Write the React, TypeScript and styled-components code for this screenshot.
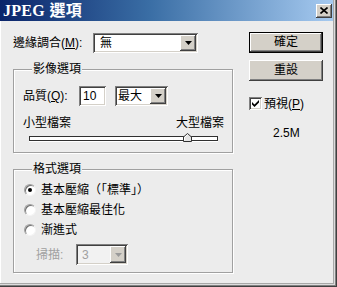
import React from "react";
import styled, { createGlobalStyle, css } from "styled-components";

const FACE = "#d4d0c8";
const BG = "#ececec";

const Global = createGlobalStyle`
  html, body { margin: 0; padding: 0; background: ${BG}; }
  body {
    font-family: "Liberation Sans", "Noto Sans CJK TC", sans-serif;
    font-size: 12px;
    color: #000;
  }
`;

const raised = css`
  background: ${FACE};
  box-shadow: inset -1px -1px #404040, inset 1px 1px #ffffff,
    inset -2px -2px #808080, inset 2px 2px ${FACE};
`;

const sunken = css`
  box-shadow: inset 1px 1px #808080, inset -1px -1px #ffffff,
    inset 2px 2px #404040, inset -2px -2px ${FACE};
`;

const Window = styled.div`
  width: 337px;
  height: 287px;
  box-sizing: border-box;
  background: ${BG};
  padding: 0 4px 4px 0;
  display: flex;
  flex-direction: column;
  box-shadow: inset -1px -1px #404040, inset -2px -2px #808080,
    inset -3px -3px #dcdcdc, inset -4px -4px #a8a8a8, inset 1px 0 #ffffff;
`;

const TitleBar = styled.div`
  height: 21px;
  flex: none;
  display: flex;
  align-items: center;
  justify-content: space-between;
  padding-left: 3px;
  background: linear-gradient(to right, #0a246a 0%, #3a6ea5 45%, #a6caf0 100%);
`;

const Title = styled.span`
  font-family: "Liberation Serif", "Noto Sans CJK TC", serif;
  font-weight: bold;
  font-size: 16px;
  line-height: 21px;
  color: #ffffff;
  letter-spacing: 0.3px;
`;

const CloseButton = styled.div`
  ${raised};
  width: 16px;
  height: 14px;
  margin-right: 1px;
  display: flex;
  align-items: center;
  justify-content: center;
`;

const Body = styled.div`
  display: flex;
  gap: 16px;
  padding: 11px 0 0 13px;
`;

const LeftColumn = styled.div`
  width: 220px;
  padding-top: 1px;
  display: flex;
  flex-direction: column;
`;

const RightColumn = styled.div`
  width: 74px;
  display: flex;
  flex-direction: column;
`;

const Row = styled.div<{ $h?: number; $mt?: number; $pl?: number }>`
  display: flex;
  align-items: center;
  height: ${(p) => p.$h ?? 20}px;
  margin-top: ${(p) => p.$mt ?? 0}px;
  padding-left: ${(p) => p.$pl ?? 0}px;
`;

const FieldLabel = styled.span<{ $w: number; $disabled?: boolean }>`
  width: ${(p) => p.$w}px;
  flex: none;
  line-height: 12px;
  white-space: nowrap;
  color: ${(p) => (p.$disabled ? "#a0a0a0" : "#000")};
`;

const Combo = styled.div<{ $w: number; $h?: number; $disabled?: boolean }>`
  ${sunken};
  width: ${(p) => p.$w}px;
  height: ${(p) => p.$h ?? 20}px;
  flex: none;
  box-sizing: border-box;
  padding: 2px;
  display: flex;
  background: ${(p) => (p.$disabled ? "#f2f2f2" : "#ffffff")};
`;

const ComboText = styled.span<{ $pl: number; $disabled?: boolean }>`
  flex: 1;
  display: flex;
  align-items: center;
  padding-left: ${(p) => p.$pl}px;
  line-height: 12px;
  color: ${(p) => (p.$disabled ? "#a0a0a0" : "#000")};
`;

const DropButton = styled.span`
  ${raised};
  width: 16px;
  flex: none;
  display: flex;
  align-items: center;
  justify-content: center;
`;

const TextBox = styled.div<{ $w: number }>`
  ${sunken};
  width: ${(p) => p.$w}px;
  height: 20px;
  flex: none;
  box-sizing: border-box;
  background: #ffffff;
  padding-left: 4px;
  display: flex;
  align-items: center;
  line-height: 12px;
`;

const Group = styled.div<{ $h: number; $mt: number }>`
  position: relative;
  height: ${(p) => p.$h}px;
  margin-top: ${(p) => p.$mt}px;
  box-sizing: border-box;
  border: 1px solid #a0a0a0;
  box-shadow: 1px 1px 0 #ffffff, inset 1px 1px 0 #ffffff;
`;

const Legend = styled.span`
  position: absolute;
  top: -7px;
  left: 18px;
  padding: 0 1px;
  background: ${BG};
  line-height: 12px;
`;

const QualityGroupBody = styled.div`
  padding: 16px 8px 0 9px;
  display: flex;
  flex-direction: column;
`;

const FormatGroupBody = styled.div`
  padding: 10px 8px 0 10px;
  display: flex;
  flex-direction: column;
`;

const SizeLabels = styled.div`
  margin-top: 11px;
  display: flex;
  justify-content: space-between;
  line-height: 12px;
`;

const Slider = styled.div`
  position: relative;
  height: 9px;
  margin: 4px 6px 0;
`;

const Track = styled.div`
  margin-top: 3px;
  height: 5px;
  box-sizing: border-box;
  background: #ffffff;
  border: 1px solid #303030;
  box-shadow: 0 1px 0 #ffffff;
`;

const Thumb = styled.svg`
  position: absolute;
  top: 0;
  display: block;
`;

const RadioRow = styled.div`
  height: 20px;
  display: flex;
  align-items: center;
  gap: 5px;
  line-height: 12px;
`;

const Radio = styled.span<{ $checked?: boolean }>`
  position: relative;
  width: 12px;
  height: 12px;
  flex: none;
  box-sizing: border-box;
  border-radius: 50%;
  background: #ffffff;
  border: 1px solid;
  border-color: #a0a0a0 #f4f4f4 #f4f4f4 #a0a0a0;
  box-shadow: inset 1px 1px #707070;
  &::after {
    content: "";
    display: ${(p) => (p.$checked ? "block" : "none")};
    position: absolute;
    left: 3px;
    top: 3px;
    width: 4px;
    height: 4px;
    border-radius: 50%;
    background: #000;
  }
`;

const DialogButton = styled.button<{ $default?: boolean }>`
  width: 74px;
  height: 21px;
  padding: 0;
  margin: 0;
  border: none;
  font: inherit;
  line-height: 21px;
  color: #000;
  background: ${FACE};
  box-shadow: ${(p) =>
    p.$default
      ? "inset 0 0 0 1px #000, inset -2px -2px #404040, inset 2px 2px #ffffff, inset -3px -3px #808080"
      : "inset -1px -1px #404040, inset 1px 1px #ffffff, inset -2px -2px #808080"};
`;

const ButtonStack = styled.div`
  display: flex;
  flex-direction: column;
  gap: 7px;
`;

const CheckRow = styled.div`
  margin-top: 16px;
  height: 13px;
  display: flex;
  align-items: center;
  gap: 2px;
  line-height: 12px;
`;

const CheckBox = styled.span`
  ${sunken};
  width: 13px;
  height: 13px;
  flex: none;
  box-sizing: border-box;
  background: #ffffff;
  display: flex;
  align-items: center;
  justify-content: center;
`;

const SizeReadout = styled.div`
  margin-top: 17px;
  padding-left: 24px;
  line-height: 12px;
`;

const Arrow = ({ disabled }: { disabled?: boolean }) => (
  <svg width="7" height="4" viewBox="0 0 7 4">
    <path d="M0 0 H7 L3.5 4 Z" fill={disabled ? "#9a9a9a" : "#000"} />
  </svg>
);

const DropDown = ({
  w,
  h,
  pl,
  text,
  disabled,
}: {
  w: number;
  h?: number;
  pl: number;
  text: string;
  disabled?: boolean;
}) => (
  <Combo $w={w} $h={h} $disabled={disabled}>
    <ComboText $pl={pl} $disabled={disabled}>
      {text}
    </ComboText>
    <DropButton>
      <Arrow disabled={disabled} />
    </DropButton>
  </Combo>
);

const QUALITY = 10;
const QUALITY_MAX = 12;
const TRACK_RANGE = 185;

export default function App() {
  const thumbLeft = Math.round((QUALITY / QUALITY_MAX) * TRACK_RANGE);
  return (
    <>
      <Global />
      <Window>
        <TitleBar>
          <Title>JPEG 選項</Title>
          <CloseButton>
            <svg width="8" height="7" viewBox="0 0 8 7">
              <path d="M0.5 0.5 L7.5 6.5 M7.5 0.5 L0.5 6.5" stroke="#000" strokeWidth="1.6" />
            </svg>
          </CloseButton>
        </TitleBar>
        <Body>
          <LeftColumn>
            <Row>
              <FieldLabel $w={80}>
                邊緣調合(<u>M</u>):
              </FieldLabel>
              <DropDown w={105} pl={5} text="無" />
            </Row>

            <Group $h={84} $mt={16}>
              <Legend>影像選項</Legend>
              <QualityGroupBody>
                <Row>
                  <FieldLabel $w={56}>
                    品質(<u>Q</u>):
                  </FieldLabel>
                  <TextBox $w={27}>10</TextBox>
                  <Row $pl={9}>
                    <DropDown w={53} pl={1} text="最大" />
                  </Row>
                </Row>
                <SizeLabels>
                  <span>小型檔案</span>
                  <span>大型檔案</span>
                </SizeLabels>
                <Slider>
                  <Track />
                  <Thumb width="9" height="9" viewBox="0 0 9 9" style={{ left: thumbLeft }}>
                    <path d="M0.5 8.5 V4 L4.5 0.5 L8.5 4 V8.5 Z" fill="#e4e4e4" stroke="#303030" />
                    <path d="M1.5 7.5 V4.4 L4.5 1.8" stroke="#ffffff" fill="none" />
                  </Thumb>
                </Slider>
              </QualityGroupBody>
            </Group>

            <Group $h={104} $mt={16}>
              <Legend>格式選項</Legend>
              <FormatGroupBody>
                <RadioRow>
                  <Radio $checked />
                  <span>基本壓縮（「標準」）</span>
                </RadioRow>
                <RadioRow>
                  <Radio />
                  <span>基本壓縮最佳化</span>
                </RadioRow>
                <RadioRow>
                  <Radio />
                  <span>漸進式</span>
                </RadioRow>
                <Row $h={21} $mt={4} $pl={12}>
                  <FieldLabel $w={40} $disabled>
                    掃描:
                  </FieldLabel>
                  <DropDown w={52} h={21} pl={4} text="3" disabled />
                </Row>
              </FormatGroupBody>
            </Group>
          </LeftColumn>

          <RightColumn>
            <ButtonStack>
              <DialogButton $default>確定</DialogButton>
              <DialogButton>重設</DialogButton>
            </ButtonStack>
            <CheckRow>
              <CheckBox>
                <svg width="7" height="7" viewBox="0 0 7 7">
                  <path d="M0 2 L0 4.5 L2.5 7 L7 2.5 L7 0 L2.5 4.5 Z" fill="#000" />
                </svg>
              </CheckBox>
              <span>
                預視(<u>P</u>)
              </span>
            </CheckRow>
            <SizeReadout>2.5M</SizeReadout>
          </RightColumn>
        </Body>
      </Window>
    </>
  );
}
